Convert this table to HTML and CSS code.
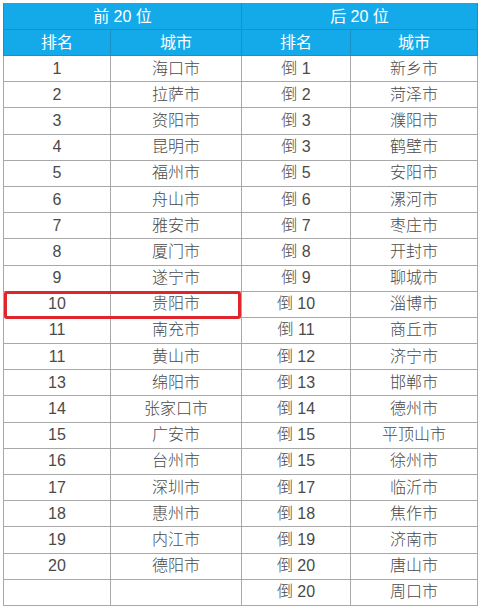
FILE: index.html
```html
<!DOCTYPE html>
<html lang="zh">
<head>
<meta charset="utf-8">
<link rel="stylesheet" href="styles.css">
</head>
<body>
<div class="wrap">
<table class="rank">
<colgroup><col class="c1"><col class="c2"><col class="c3"><col class="c4"></colgroup>
<thead>
<tr class="h1"><th colspan="2">前 20 位</th><th colspan="2">后 20 位</th></tr>
<tr class="h2"><th>排名</th><th>城市</th><th>排名</th><th>城市</th></tr>
</thead>
<tbody>
<tr><td>1</td><td>海口市</td><td>倒 1</td><td>新乡市</td></tr>
<tr><td>2</td><td>拉萨市</td><td>倒 2</td><td>菏泽市</td></tr>
<tr><td>3</td><td>资阳市</td><td>倒 3</td><td>濮阳市</td></tr>
<tr><td>4</td><td>昆明市</td><td>倒 3</td><td>鹤壁市</td></tr>
<tr><td>5</td><td>福州市</td><td>倒 5</td><td>安阳市</td></tr>
<tr><td>6</td><td>舟山市</td><td>倒 6</td><td>漯河市</td></tr>
<tr><td>7</td><td>雅安市</td><td>倒 7</td><td>枣庄市</td></tr>
<tr><td>8</td><td>厦门市</td><td>倒 8</td><td>开封市</td></tr>
<tr><td>9</td><td>遂宁市</td><td>倒 9</td><td>聊城市</td></tr>
<tr><td>10</td><td>贵阳市</td><td>倒 10</td><td>淄博市</td></tr>
<tr><td>11</td><td>南充市</td><td>倒 11</td><td>商丘市</td></tr>
<tr><td>11</td><td>黄山市</td><td>倒 12</td><td>济宁市</td></tr>
<tr><td>13</td><td>绵阳市</td><td>倒 13</td><td>邯郸市</td></tr>
<tr><td>14</td><td>张家口市</td><td>倒 14</td><td>德州市</td></tr>
<tr><td>15</td><td>广安市</td><td>倒 15</td><td>平顶山市</td></tr>
<tr><td>16</td><td>台州市</td><td>倒 15</td><td>徐州市</td></tr>
<tr><td>17</td><td>深圳市</td><td>倒 17</td><td>临沂市</td></tr>
<tr><td>18</td><td>惠州市</td><td>倒 18</td><td>焦作市</td></tr>
<tr><td>19</td><td>内江市</td><td>倒 19</td><td>济南市</td></tr>
<tr><td>20</td><td>德阳市</td><td>倒 20</td><td>唐山市</td></tr>
<tr><td></td><td></td><td>倒 20</td><td>周口市</td></tr>
</tbody>
</table>
<div class="highlight"></div>
</div>
</body>
</html>
```
FILE: styles.css
```css
html, body {
  margin: 0;
  padding: 0;
  background: #ffffff;
}
body {
  font-family: "Liberation Sans", "Noto Sans CJK SC", sans-serif;
}
.wrap {
  position: relative;
  padding: 3px 0 0 3px;
  width: 475px;
}
.rank {
  border-collapse: collapse;
  table-layout: fixed;
  width: 474px;
  font-size: 16px;
  font-weight: 300;
  color: #4a4a4a;
}
.c1 { width: 107px; }
.c2 { width: 131px; }
.c3 { width: 109px; }
.c4 { width: 127px; }
.rank th {
  background: #14aaea;
  color: #ffffff;
  font-weight: 400;
  font-size: 16px;
  height: 25px;
  padding: 0;
  border: 1px solid #1b8fc6;
  text-align: center;
  line-height: 1;
}
.rank .h1 th {
  border-top-color: #14aaea;
}
.rank td {
  height: 25.2px;
  padding: 0;
  border: 1px solid #a8a8a8;
  text-align: center;
  line-height: 1;
}
.highlight {
  position: absolute;
  left: 4px;
  top: 291px;
  width: 231px;
  height: 22px;
  border: 3px solid #e0262a;
  border-radius: 3px;
}
```
